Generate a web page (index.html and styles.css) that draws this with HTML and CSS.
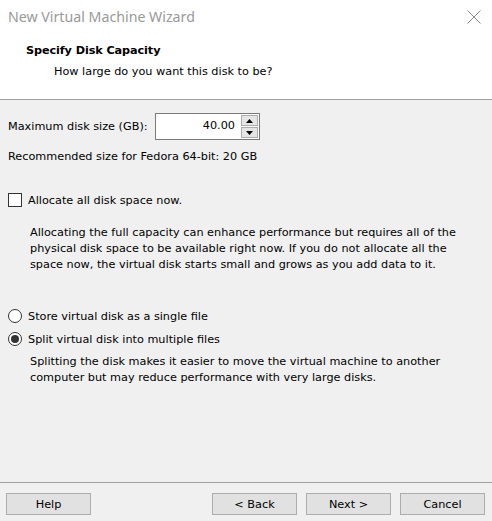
FILE: index.html
```html
<!DOCTYPE html>
<html>
<head>
<meta charset="utf-8">
<link rel="stylesheet" href="styles.css">
</head>
<body>
<div class="window">
  <div class="titlebar">
    <span class="title">New Virtual Machine Wizard</span>
    <svg class="close" width="14" height="14" viewBox="0 0 14 14"><path d="M0.5 0.5 L13.5 13.5 M13.5 0.5 L0.5 13.5" stroke="#8a8a8a" stroke-width="1" fill="none"/></svg>
  </div>
  <div class="header">
    <div class="h-title">Specify Disk Capacity</div>
    <div class="h-sub">How large do you want this disk to be?</div>
  </div>
  <div class="main">
    <div class="size-row">
      <span class="label">Maximum disk size (GB):</span>
      <div class="spinbox">
        <span class="value">40.00</span>
        <div class="spin">
          <div class="spin-btn"><svg width="7" height="4" viewBox="0 0 7 4"><path d="M0 4 L3.5 0 L7 4 Z" fill="#000"/></svg></div>
          <div class="spin-btn"><svg width="7" height="4" viewBox="0 0 7 4"><path d="M0 0 L3.5 4 L7 0 Z" fill="#000"/></svg></div>
        </div>
      </div>
    </div>
    <div class="rec">Recommended size for Fedora 64-bit: 20 GB</div>
    <div class="check-row">
      <span class="checkbox"></span>
      <span class="opt-label">Allocate all disk space now.</span>
    </div>
    <p class="desc first">Allocating the full capacity can enhance performance but requires all of the physical disk space to be available right now. If you do not allocate all the space now, the virtual disk starts small and grows as you add data to it.</p>
    <div class="radio-row r1">
      <span class="radio"></span>
      <span class="opt-label">Store virtual disk as a single file</span>
    </div>
    <div class="radio-row r2">
      <span class="radio checked"></span>
      <span class="opt-label">Split virtual disk into multiple files</span>
    </div>
    <p class="desc second">Splitting the disk makes it easier to move the virtual machine to another computer but may reduce performance with very large disks.</p>
  </div>
  <div class="footer">
    <button class="btn">Help</button>
    <div class="spacer"></div>
    <button class="btn">&lt; Back</button>
    <button class="btn">Next &gt;</button>
    <button class="btn">Cancel</button>
  </div>
</div>
</body>
</html>
```
FILE: styles.css
```css
html, body {
  margin: 0;
  padding: 0;
}
body {
  width: 492px;
  height: 521px;
  overflow: hidden;
  font-family: "DejaVu Sans", sans-serif;
  font-size: 11.25px;
  color: #000;
}
.window {
  width: 492px;
  height: 521px;
  display: flex;
  flex-direction: column;
  background: #f0f0f0;
}
.titlebar {
  height: 33px;
  flex: none;
  box-sizing: border-box;
  background: #fff;
  display: flex;
  align-items: center;
  justify-content: space-between;
  padding: 0 11px 0 8px;
}
.title {
  font-family: "Noto Sans", sans-serif;
  font-size: 14.2px;
  color: #999;
}
.close {
  display: block;
}
.header {
  height: 67px;
  flex: none;
  background: #fff;
  border-bottom: 1px solid #a0a0a0;
  box-sizing: border-box;
  padding-top: 10px;
}
.h-title {
  font-weight: bold;
  line-height: 16px;
  padding-left: 26px;
  letter-spacing: -0.1px;
}
.h-sub {
  line-height: 16px;
  margin-top: 5px;
  padding-left: 54px;
}
.main {
  flex: 1;
  padding: 0 8px;
}
.size-row {
  display: flex;
  align-items: center;
  margin-top: 13px;
  height: 27px;
}
.label {
  line-height: 16px;
  width: 147px;
}
.spinbox {
  width: 105px;
  height: 27px;
  box-sizing: border-box;
  border: 1px solid #7a7a7a;
  background: #fff;
  display: flex;
}
.value {
  flex: 1;
  text-align: right;
  padding-right: 6px;
  padding-top: 4px;
  line-height: 16px;
}
.spin {
  width: 17px;
  display: flex;
  flex-direction: column;
  padding: 1px 1px 1px 0;
  gap: 1px;
}
.spin-btn {
  flex: 1;
  background: #e5e5e5;
  border: 1px solid #adadad;
  display: flex;
  align-items: center;
  justify-content: center;
}
.spin-btn svg {
  display: block;
}
.rec {
  line-height: 16px;
  margin-top: 9px;
}
.check-row, .radio-row {
  display: flex;
  align-items: center;
  height: 16px;
}
.check-row {
  margin-top: 27px;
}
.checkbox {
  width: 14px;
  height: 14px;
  box-sizing: border-box;
  border: 1px solid #333;
  background: #fff;
  margin-right: 6px;
}
.radio {
  width: 14px;
  height: 14px;
  box-sizing: border-box;
  border: 1px solid #333;
  border-radius: 50%;
  background: #fff;
  margin-right: 6px;
  display: flex;
  align-items: center;
  justify-content: center;
}
.radio.checked::after {
  content: "";
  width: 8px;
  height: 8px;
  border-radius: 50%;
  background: #333;
}
.desc {
  margin: 0;
  padding-left: 22px;
  max-width: 432px;
  line-height: 16px;
}
.desc.first {
  margin-top: 17px;
}
.r1 {
  margin-top: 35px;
}
.r2 {
  margin-top: 7px;
}
.desc.second {
  margin-top: 7px;
}
.footer {
  height: 39px;
  flex: none;
  box-sizing: border-box;
  border-top: 1px solid #a0a0a0;
  display: flex;
  align-items: flex-start;
  padding: 10px 7px 0 6px;
  gap: 9px;
}
.spacer {
  flex: 1;
}
.btn {
  width: 85px;
  height: 22px;
  box-sizing: border-box;
  border: 1px solid #adadad;
  background: #e1e1e1;
  font-family: "DejaVu Sans", sans-serif;
  font-size: 11.25px;
  color: #000;
  padding: 0;
  margin: 0;
}
```
